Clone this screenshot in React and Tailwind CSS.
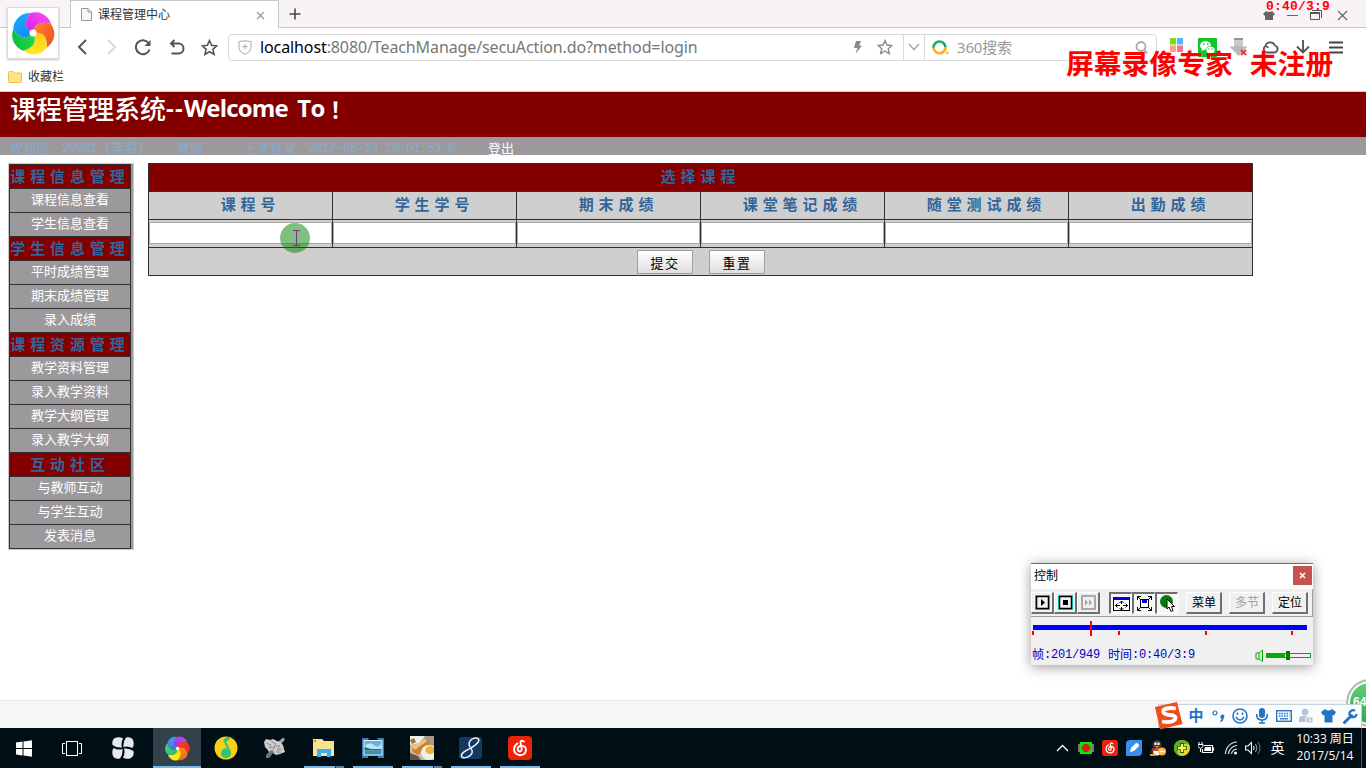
import React from 'react';

const SANS = "font-['Liberation_Sans','Noto_Sans_CJK_SC',sans-serif]";
const MONO = "font-['Liberation_Mono','Noto_Sans_CJK_SC',monospace]";

function Ico({ w = 16, h = 16, vb, className = '', children }) {
  return (
    <svg
      width={w}
      height={h}
      viewBox={vb || `0 0 ${w} ${h}`}
      fill="none"
      className={'block shrink-0 ' + className}
    >
      {children}
    </svg>
  );
}

const PETAL5 = 'M0 0Q-13.400 -6.800 -2.900 -20.800A17 17 0 0 1 18.900 -9.200Q2.300 -14.800 0 0Z';
const PETAL6 = 'M0 0Q-12.600 -8.200 -.7 -21A14 14 0 0 1 17.800 -11.100Q.8 -15 0 0Z';

function Pinwheel({ size, colors, hole = 3.4 }) {
  const step = 360 / colors.length;
  return (
    <svg width={size} height={size} viewBox="-23 -23 46 46" className="block shrink-0">
      {colors.map(([a, b], i) => (
        <g key={a} transform={`rotate(${i * step})`}>
          <linearGradient id={`p${size}-${i}`} x1="0" y1="1" x2="1" y2="0">
            <stop offset="0" stopColor={a} />
            <stop offset="1" stopColor={b} />
          </linearGradient>
          <path d={colors.length === 5 ? PETAL5 : PETAL6} fill={`url(#p${size}-${i})`} />
        </g>
      ))}
      <circle r={hole} fill="#fff" />
    </svg>
  );
}

function TabBar() {
  return (
    <div className="flex h-7 shrink-0 border-b border-[#c9c7c9] bg-[#f7f3f7]">
      <div className="ml-[70px] flex h-7 w-[209px] shrink-0 items-center border-x border-t border-[#c9c7c9] bg-white pl-[10px]">
        <Ico w={11} h={13}>
          <path d="M.5 .5H7L10.500 4V12.500H.5ZM7 .5V4H10.500" stroke="#999" fill="#f7f7f7" />
        </Ico>
        <span className="ml-[6px] w-[158px] text-[12px] leading-4 text-[#333]">课程管理中心</span>
        <Ico w={9} h={9} className="mt-[2px]">
          <path d="M1 1L8 8M8 1L1 8" stroke="#999" strokeWidth="1.200" />
        </Ico>
      </div>
      <Ico w={12} h={12} className="ml-[10px] mt-2">
        <path d="M6 .5V11.500M.5 6H11.500" stroke="#4a4a4a" strokeWidth="1.600" />
      </Ico>
      <div className="ml-auto mr-[18px] flex items-center gap-[12px] pt-[3px]">
        <Ico w={12} h={11}>
          <path d="M3 1L0 4L2 6V10H10V6L12 4L9 1Q6 3 3 1Z" fill="#666266" />
        </Ico>
        <Ico w={11} h={11}>
          <path d="M0 5.500H11" stroke="#666" />
        </Ico>
        <Ico w={12} h={11}>
          <path d="M.5 2.500H9.500V9.500H.5ZM2 .5H11.500V8" stroke="#555" />
          <path d="M.5 3H9.500" stroke="#555" strokeWidth="2" />
        </Ico>
        <Ico w={11} h={11} className="ml-[3px]">
          <path d="M1 1L10 10M10 1L1 10" stroke="#666" strokeWidth="1.200" />
        </Ico>
      </div>
    </div>
  );
}

const STAR = 'M8 1.500L10 6L14.800 6.500L11.200 9.700L12.300 14.500L8 12L3.700 14.500L4.800 9.700L1.200 6.500L6 6Z';

function NavBar() {
  return (
    <div className="flex h-[38px] shrink-0 items-center bg-white pl-[66px]">
      <div className="flex w-[31px] justify-center">
        <Ico w={10} h={16}>
          <path d="M9 1L2 8L9 15" stroke="#555" strokeWidth="2" />
        </Ico>
      </div>
      <div className="flex w-[29px] justify-center">
        <Ico w={10} h={16}>
          <path d="M1 1L8 8L1 15" stroke="#d8d8d8" strokeWidth="2" />
        </Ico>
      </div>
      <div className="flex w-[34px] justify-center">
        <Ico w={18} h={17}>
          <path d="M14.500 4A7 7 0 1 0 15.500 10.500" stroke="#555" strokeWidth="2" />
          <path d="M16.500 1V7H10.500Z" fill="#555" />
        </Ico>
      </div>
      <div className="flex w-[33px] justify-center">
        <Ico w={16} h={16}>
          <path d="M5.500 1L2 4.500L5.500 8M2 4.500H9.500A5 5 0 0 1 9.500 14.500H2.500" stroke="#555" strokeWidth="2" />
        </Ico>
      </div>
      <div className="flex w-[32px] justify-center">
        <Ico w={17} h={17} vb="0 0 16 16">
          <path d={STAR} stroke="#555" strokeWidth="1.500" />
        </Ico>
      </div>
      <div className="ml-[3px] flex h-[27px] w-[929px] shrink-0 items-center rounded-sm border border-[#d9d9d9]">
        <Ico w={14} h={15} className="ml-[9px]">
          <path d="M1 1.500Q4 1.500 7 .7Q10 1.500 13 1.500V8Q13 12 7 14.300Q1 12 1 8Z" stroke="#aaa" />
          <path d="M7 4V9.500M4.200 6.700H9.800" stroke="#aaa" />
        </Ico>
        <span className="ml-[8px] w-[590px] whitespace-nowrap font-['Noto_Sans',sans-serif] text-[16px] leading-5 tracking-[-0.11px] text-[#777]">
          <span className="text-black">localhost</span>:8080/TeachManage/secuAction.do?method=login
        </span>
        <Ico w={8} h={13} className="ml-[4px]">
          <path d="M2 0H7L5 4.500H8L1.500 13L3.500 7H0Z" fill="#888" />
        </Ico>
        <Ico w={16} h={16} className="ml-[15px]">
          <path d={STAR} stroke="#888" strokeWidth="1.400" />
        </Ico>
        <div className="ml-[10px] flex h-full w-[22px] items-center justify-center border-x border-[#d9d9d9]">
          <Ico w={12} h={8}>
            <path d="M1 1L6 6.500L11 1" stroke="#aaa" strokeWidth="1.600" />
          </Ico>
        </div>
        <Ico w={17} h={16} className="ml-[7px]">
          <path d="M1.500 9A6 6 0 1 1 13.500 8" stroke="#21ac58" strokeWidth="2.600" />
          <path d="M1.500 8.500A6 6 0 0 0 13.500 8" stroke="#fbb018" strokeWidth="2.600" />
          <circle cx="15.200" cy="14" r="1.300" fill="#fbb018" />
        </Ico>
        <span className="ml-[8px] font-['Noto_Sans','Noto_Sans_CJK_SC',sans-serif] text-[15px] leading-5 tracking-[-0.2px] text-[#999]">
          360搜索
        </span>
        <Ico w={13} h={13} className="ml-auto mr-[8px]">
          <circle cx="6" cy="5.500" r="4.500" stroke="#aaa" strokeWidth="1.800" />
          <path d="M9 8.500L12 12.500" stroke="#aaa" strokeWidth="2" />
        </Ico>
      </div>
      <div className="ml-[13px] flex items-center">
        <Ico w={13} h={14} className="mb-1">
          <path d="M0 0H6V6.500H0Z" fill="#7bd91e" />
          <path d="M7 0H13V6.500H7Z" fill="#4fb4f8" />
          <path d="M0 7.500H6V14H0Z" fill="#ffa27a" />
          <path d="M7 7.500H13V14H7Z" fill="#f8718a" />
        </Ico>
        <Ico w={19} h={19} className="ml-[15px]">
          <rect width="19" height="19" rx="1" fill="#0cc82c" />
          <ellipse cx="7.500" cy="7.500" rx="5.500" ry="4.300" fill="#fff" />
          <path d="M4 10L3.500 13L7 11.500Z" fill="#fff" />
          <ellipse cx="12.500" cy="12" rx="4.600" ry="3.800" fill="#fff" stroke="#0cc82c" strokeWidth=".7" />
          <path d="M14 15L15.500 16.500L15.500 13.500Z" fill="#fff" />
          <path d="M5 6H6.500M9 6H10.500M10.500 11H11.500M13.500 11H14.500" stroke="#0cc82c" strokeWidth="1.300" />
        </Ico>
        <Ico w={19} h={20} className="ml-[12px]">
          <path d="M5 1H14V9.500H18.500L9.500 19L.5 9.500H5Z" fill="#b4babf" />
          <path d="M5 1H14V9H5Z" fill="#c6cacd" />
          <path d="M5 1H14V3H5Z" fill="#8f959a" />
          <path d="M12 13L17 18M17 13L12 18" stroke="#ed3b32" strokeWidth="2" />
        </Ico>
        <Ico w={17} h={14} className="ml-[14px]">
          <path d="M4.500 12.500A3.600 3.600 0 0 1 3.500 6A5 5 0 0 1 13 5.500A3.600 3.600 0 0 1 12.500 12.500Z" stroke="#555" strokeWidth="1.800" />
          <path d="M4 6.500Q6 6.500 6.500 8" stroke="#555" strokeWidth="1.300" />
        </Ico>
        <Ico w={14} h={14} className="ml-[17px]">
          <path d="M7 0V12M1 6.500L7 12.500L13 6.500" stroke="#555" strokeWidth="1.900" />
        </Ico>
        <Ico w={14} h={13} className="ml-[19px]">
          <path d="M0 1.500H14M0 6.500H14M0 11.500H14" stroke="#444" strokeWidth="1.800" />
        </Ico>
      </div>
    </div>
  );
}

function Bookmarks() {
  return (
    <div className="flex h-[26px] shrink-0 items-center border-b border-[#cfcfcf] bg-white pb-[4px] pl-2">
      <Ico w={14} h={12}>
        <path d="M.5 1.500Q.5 .5 1.500 .5H5L6.500 2H12.500Q13.500 2 13.500 3V10.500Q13.500 11.500 12.500 11.500H1.500Q.5 11.500 .5 10.500Z" fill="#ffe384" stroke="#efc150" />
      </Ico>
      <span className="ml-[6px] text-[12px] leading-4 text-[#333]">收藏栏</span>
    </div>
  );
}

function Banner() {
  return (
    <div className="shrink-0">
      <div className="flex h-[45px] items-start bg-[#840000] pl-[10px] font-bold text-white">
        <span className="whitespace-nowrap font-['Noto_Sans_CJK_SC',sans-serif] text-[26px] font-medium leading-8">
          课程管理系统
        </span>
        <span className="font-['Open_Sans',sans-serif] text-[24px] leading-8 tracking-[1.200px]">--</span>
        <span className="w-[146px] whitespace-nowrap font-['Open_Sans',sans-serif] text-[24px] leading-8 tracking-[-0.8px] [word-spacing:4px]">
          Welcome To
        </span>
        <span className="font-['Noto_Sans_CJK_SC',sans-serif] text-[22px] leading-8">！</span>
      </div>
      <div className="flex h-[18px] items-center bg-[#9c999c] pl-[10px] pt-[5px] text-[13px] leading-[13px] text-[#84add0]">
        <span className="w-[52px]">欢迎您</span>
        <span className={`w-[115px] whitespace-nowrap tracking-[-0.8px] ${MONO}`}>
          20001 (<span className="tracking-normal">李湘</span>)
        </span>
        <span className="w-[67px]">教师</span>
        <span className="w-[64px] whitespace-nowrap">上次登录:</span>
        <span className={`w-[180px] whitespace-nowrap tracking-[-0.8px] ${MONO}`}>2017-05-14 10:01:53.0</span>
        <span className="text-white">登出</span>
      </div>
    </div>
  );
}

const MENU = [
  ['课程信息管理', ['课程信息查看', '学生信息查看']],
  ['学生信息管理', ['平时成绩管理', '期末成绩管理', '录入成绩']],
  ['课程资源管理', ['教学资料管理', '录入教学资料', '教学大纲管理', '录入教学大纲']],
  ['互动社区', ['与教师互动', '与学生互动', '发表消息']],
];

function Sidebar() {
  return (
    <div className="ml-2 mt-2 flex h-[387px] w-[126px] shrink-0 border border-[#c9c9c9] bg-[#9c999c]">
      <div className="h-[385px] w-[122px] border-x border-b border-[#312f31]">
        {MENU.map(([title, items]) => (
          <div key={title}>
            <div className="flex h-6 items-center justify-center whitespace-nowrap border-t border-[#312f31] bg-[#840000] text-[15px] font-bold leading-5 tracking-[4.900px] text-[#31659c]">
              {title}
            </div>
            {items.map((t) => (
              <div key={t} className="flex h-6 items-center justify-center border-t border-[#312f31] pb-px text-[13px] leading-5 text-white">
                {t}
              </div>
            ))}
          </div>
        ))}
      </div>
    </div>
  );
}

const COLUMNS = ['课程号', '学生学号', '期末成绩', '课堂笔记成绩', '随堂测试成绩', '出勤成绩'];

function FormButton({ children }) {
  return (
    <button className="h-6 w-14 border border-[#a0a0a0] bg-linear-to-b from-white to-[#e0dde0] pl-px pt-[3px] text-[13px] leading-[18px] tracking-[1.500px] text-black">
      {children}
    </button>
  );
}

function GradeForm() {
  return (
    <div className="ml-[14px] mt-2 h-[113px] w-[1105px] shrink-0 border border-[#312f31] bg-[#cfcfcf]">
      <div className="flex h-[27px] items-center justify-center bg-[#840000] text-[15px] font-bold tracking-[4.900px] text-[#31659c]">
        选择课程
      </div>
      <div className="flex">
        {COLUMNS.map((c) => (
          <div
            key={c}
            className="flex h-7 w-[184px] items-center justify-center border-r border-t border-[#312f31] pl-[20px] text-[15px] font-bold tracking-[4.900px] text-[#31659c] last:w-[183px] last:border-r-0"
          >
            {c}
          </div>
        ))}
      </div>
      <div className="flex">
        {COLUMNS.map((c) => (
          <div key={c} className="h-7 w-[184px] border-r border-t border-[#312f31] pt-[2px] last:w-[183px] last:border-r-0">
            <div className="h-[22px] w-full border border-[#a9a9a9] bg-white" />
          </div>
        ))}
      </div>
      <div className="flex h-7 items-start justify-center gap-4 border-t border-[#312f31] pt-[2px]">
        <FormButton>提交</FormButton>
        <FormButton>重置</FormButton>
      </div>
    </div>
  );
}

function Raised({ className = '', children }) {
  return (
    <div className={'flex h-[22px] items-center justify-center border-b-2 border-l border-r-2 border-t border-b-[#6f6f6f] border-l-white border-r-[#6f6f6f] border-t-white bg-[#f0f0f0] ' + className}>
      {children}
    </div>
  );
}

function Sunken({ children }) {
  return (
    <div className="flex h-[22px] w-[23px] items-center justify-center border-b border-l-2 border-r border-t-2 border-b-white border-l-[#6f6f6f] border-r-white border-t-[#6f6f6f] bg-[#f6f6f6]">
      {children}
    </div>
  );
}

function Recorder() {
  return (
    <div className={`absolute left-[1031px] top-[563px] flex h-[102px] w-[282px] flex-col border-t border-[#1883d7] bg-[#f0f0f0] text-[12px] shadow-[0_2px_12px_rgba(0,0,0,0.4)] ${SANS}`}>
      <div className="flex h-[25px] shrink-0 justify-between bg-white pl-[3px] pr-px pt-[2px]">
        <span className="pt-px leading-[18px] text-black">控制</span>
        <div className="flex h-[19px] w-[19px] items-center justify-center bg-[#c75050]">
          <Ico w={7} h={7}>
            <path d="M1 1L6 6M6 1L1 6" stroke="#fff" strokeWidth="1.600" />
          </Ico>
        </div>
      </div>
      <div className="flex h-[28px] shrink-0 items-center border-b border-r border-[#a0a0a0]">
        <Raised className="w-[23px]">
          <Ico w={15} h={15}>
            <rect width="15" height="15" fill="#00efef" />
            <rect x="1.500" y="1.500" width="12" height="12" fill="#f0f0f0" stroke="#000" strokeWidth="1.500" />
            <path d="M6 4L10 7.500L6 11Z" fill="#000" />
          </Ico>
        </Raised>
        <Raised className="w-[23px]">
          <Ico w={15} h={15}>
            <rect width="15" height="15" fill="#00efef" />
            <rect x="1.500" y="1.500" width="12" height="12" fill="#f0f0f0" stroke="#000" strokeWidth="1.500" />
            <path d="M5 5H10V10H5Z" fill="#000" />
          </Ico>
        </Raised>
        <Raised className="w-[23px]">
          <Ico w={15} h={15}>
            <rect x="1" y="1" width="13" height="13" fill="#f0f0f0" stroke="#a0a0a0" strokeWidth="1.800" />
            <path d="M4 4.500L7 7.500L4 10.500ZM8 4.500L11 7.500L8 10.500Z" fill="#a0a0a0" />
          </Ico>
        </Raised>
        <div className="ml-[9px] flex">
          <Sunken>
            <Ico w={17} h={15}>
              <rect x=".5" y="1.500" width="16" height="13" stroke="#000" fill="#fff" />
              <path d="M1 2.500H16" stroke="#0000e0" strokeWidth="3" />
              <path d="M8.500 5V14M2 9.500H15M4.500 7.500L2.500 9.500L4.500 11.500M12.500 7.500L14.500 9.500L12.500 11.500M6.500 7L8.500 5L10.500 7M6.500 12L8.500 14L10.500 12" stroke="#000" />
              <rect x="7" y="8" width="3" height="3" fill="#fff" />
            </Ico>
          </Sunken>
          <Sunken>
            <Ico w={15} h={15}>
              <rect x="3.500" y="3.500" width="8" height="8" stroke="#000" fill="#fff" />
              <path d="M5 5.500H10" stroke="#0000e0" strokeWidth="3" />
              <path d="M.5 4V.5H4M11 .5H14.500V4M.5 11V14.500H4M11 14.500H14.500V11M.5 .5L4 4M14.500 .5L11 4M.5 14.500L4 11M14.500 14.500L11 11" stroke="#000" />
            </Ico>
          </Sunken>
          <Sunken>
            <Ico w={17} h={18}>
              <circle cx="7.500" cy="7.500" r="6.500" fill="#008000" />
              <path d="M8 5V15L10 13L12 17.500L14 16.500L12.500 12.500H15.500Z" fill="#fff" stroke="#000" />
            </Ico>
          </Sunken>
        </div>
        <Raised className="ml-[8px] w-[36px] pl-px pt-[2px] text-black">菜单</Raised>
        <Raised className="ml-[7px] w-[36px] pl-px pt-[2px] text-[#a0a0a0]">多节</Raised>
        <Raised className="ml-[7px] w-[36px] pl-px pt-[2px] text-black">定位</Raised>
      </div>
      <div className="shrink-0 pl-px pt-[4px]">
        <Ico w={276} h={16}>
          <path d="M1 4H275V9H1Z" fill="#0000ff" />
          <path d="M58 0H60V15H58ZM0 10H2V14H0ZM86 10H88V14H86ZM173 10H175V14H173ZM259 10H261V14H259Z" fill="#ff0000" />
        </Ico>
      </div>
      <div className="flex items-center pl-px pt-[10px] leading-4 text-[#0000c8]">
        <span>帧</span>
        <span className={`w-[64px] text-[12px] tracking-[-0.2px] ${MONO}`}>:201/949</span>
        <span>时间</span>
        <span className={`text-[12px] tracking-[-0.2px] ${MONO}`}>:0:40/3:9</span>
        <Ico w={56} h={13} className="ml-auto mr-[2px]">
          <path d="M1 4H4V10H1ZM4 4L7.500 1V12.500L4 10" stroke="#00b000" />
          <rect x="11.500" y="4.500" width="44" height="4" stroke="#00b000" />
          <path d="M11 4H30V9H11Z" fill="#00b000" />
          <path d="M31 2H35V11H31Z" fill="#007c00" />
        </Ico>
      </div>
    </div>
  );
}

function InputBar() {
  return (
    <div className="absolute left-[1158px] top-[704px] flex h-6 w-[204px] items-center border border-[#c4d2df] bg-[#fafcfe] text-[#2274c5]">
      <div className="w-[26px]">
        <Ico w={30} h={30} className="-ml-[5px]">
          <path d="M1 6L23 1L28.500 23L6 28.500Z" fill="#f04d1a" />
          <path d="M22 7.500Q13 6 9.500 9Q8 13.500 16 14Q23 14.500 21 18.500Q17 22.500 8 20.500" stroke="#fff" strokeWidth="3.800" />
        </Ico>
      </div>
      <div className="flex w-[22px] justify-center text-[15px] font-bold leading-5">中</div>
      <div className="flex w-[22px] justify-center">
        <Ico w={13} h={12}>
          <circle cx="3" cy="3" r="2" stroke="#2274c5" strokeWidth="1.200" />
          <path d="M8.500 6A2 2 0 1 1 11.800 8Q11.500 11 8.500 12L8 11Q9.500 10 9.500 9Q8 8 8.500 6Z" fill="#2274c5" />
        </Ico>
      </div>
      <div className="flex w-[22px] justify-center">
        <Ico w={16} h={16}>
          <circle cx="8" cy="8" r="7" stroke="#2274c5" strokeWidth="1.600" />
          <path d="M5.500 4.500V7M10.500 4.500V7M4 9Q8 15 12 9" stroke="#2274c5" strokeWidth="1.500" />
        </Ico>
      </div>
      <div className="flex w-[22px] justify-center">
        <Ico w={12} h={16}>
          <rect x="3" y="0" width="6" height="10" rx="3" fill="#2274c5" />
          <path d="M.8 6V8Q1.500 12 6 12Q10.500 12 11.200 8V6M6 12V15M3 15H9" stroke="#2274c5" strokeWidth="1.500" />
        </Ico>
      </div>
      <div className="flex w-[22px] justify-center">
        <Ico w={16} h={12}>
          <rect x=".7" y=".7" width="14.600" height="10.600" stroke="#2274c5" strokeWidth="1.400" />
          <path d="M3 3.500H13.500M3 6H13.500" stroke="#2274c5" strokeWidth="1.400" strokeDasharray="1.500 1" />
          <path d="M4 8.800H12" stroke="#2274c5" strokeWidth="1.300" />
        </Ico>
      </div>
      <div className="flex w-[23px] justify-center">
        <Ico w={15} h={16}>
          <circle cx="6" cy="4" r="3.300" fill="#b5c3d6" />
          <path d="M0 14V10Q1 7.500 6 7.500Q9 7.500 10 9V14Z" fill="#b5c3d6" />
          <path d="M7 9H14V15H7Z" fill="#b5c3d6" stroke="#fff" />
          <path d="M10.500 10.500V13H12" stroke="#fff" />
        </Ico>
      </div>
      <div className="flex w-[21px] justify-center">
        <Ico w={15} h={14}>
          <path d="M4 0Q7.500 3 11 0L15 3L13 6.500L11.500 6V13.500H3.500V6L2 6.500L0 3Z" fill="#2274c5" />
        </Ico>
      </div>
      <div className="flex w-[22px] justify-center">
        <Ico w={15} h={15}>
          <path d="M1.500 13.500L8.500 6.500" stroke="#2274c5" strokeWidth="3" strokeLinecap="round" />
          <path d="M12 1.800A3.500 3.500 0 1 0 13.500 5" stroke="#2274c5" strokeWidth="2.300" />
        </Ico>
      </div>
    </div>
  );
}

function NetEase({ size }) {
  return (
    <svg width={size} height={size} viewBox="0 0 24 24" className="block shrink-0" fill="none">
      <rect width="24" height="24" rx="4" fill="#ee2209" />
      <path
        d="M16 5.500Q12.500 3.500 12.500 6.500L13.800 13Q13.500 15.500 11.700 15.500Q9.500 15.200 9.700 12.500Q10.500 9.800 13.500 9.600Q18 10 18 14Q17.500 19 12 19.200Q6.200 18.500 6 13Q6.200 9.500 9.500 7.500"
        stroke="#fff"
        strokeWidth="1.900"
        strokeLinecap="round"
      />
    </svg>
  );
}

function Task({ children, active, open, stacked }) {
  return (
    <div className={'flex shrink-0 flex-col items-center ' + (active ? 'w-12 bg-[#33424a]' : 'w-[49px]')}>
      <div className="flex h-[38px] items-center pt-[2px]">{children}</div>
      {active && <div className="h-[2px] w-full bg-[#76b9ed]" />}
      {open && (
        <div className="flex h-[2px] w-10 bg-[#76b9ed]">
          {stacked && <div className="ml-auto w-[9px] border-l border-[#17303f] bg-[#5384aa]" />}
        </div>
      )}
    </div>
  );
}

function Taskbar() {
  return (
    <div className="flex h-10 shrink-0 bg-[#000f16]">
      <div className="flex w-12 items-center justify-center">
        <Ico w={16} h={17}>
          <path d="M0 2.500L6.500 1.600V8H0ZM7.500 1.400L16 .2V8H7.500ZM0 9H6.500V15.400L0 14.500ZM7.500 9H16V16.800L7.500 15.600Z" fill="#fff" />
        </Ico>
      </div>
      <div className="flex w-12 items-center justify-center">
        <Ico w={20} h={15}>
          <rect x="4.500" y=".5" width="11" height="14" stroke="#fff" />
          <path d="M3 2.500H.5V12.500H3M17 2.500H19.500V12.500H17" stroke="#fff" />
        </Ico>
      </div>
      <div className="mr-[3px] flex w-[54px] items-center justify-center">
        <Ico w={22} h={22}>
          {[0, 90, 180, 270].map((r) => (
            <path key={r} transform={`rotate(${r} 11 11)`} d="M10 10.500Q4.500 11 .5 8Q-.5 2.500 3.500 .8Q8 -.5 11 1.500Q8.500 6 10 10.500Z" fill="#e6e9ee" />
          ))}
        </Ico>
      </div>
      <Task active>
        <Pinwheel
          size={25}
          hole={3}
          colors={[
            ['#a22ee0', '#c44bf0'],
            ['#ff4a20', '#e62222'],
            ['#ff9a1c', '#f05a20'],
            ['#ffd900', '#fff01e'],
            ['#2fb673', '#40d080'],
            ['#3a72e4', '#4a9cf8'],
          ]}
        />
      </Task>
      <Task>
        <Ico w={24} h={24}>
          <circle cx="12" cy="12" r="11.500" fill="#f8cf19" />
          <circle cx="12" cy="17.300" r="5" fill="#31c27c" />
          <path d="M15.800 16L10.500 4.800" stroke="#31c27c" strokeWidth="2" />
          <path d="M9.300 4.800Q11 1 16 .8Q15.500 5 10.500 6.500Z" fill="#31c27c" />
        </Ico>
      </Task>
      <Task>
        <Ico w={23} h={22}>
          <path d="M15 5L20 .5L22 2.500L18 7Z" fill="#a5a5a5" />
          <path d="M1 5L3 2L7 3L10 2L14 4L17 5L20 8L21 12L22 15L17 17L13 18L10 16L6 15L4 12L2 10Z" fill="#cdcdcd" />
          <path d="M3 6L8 8L6 11L12 10L9 14M8 4L13 7L11 9L17 9L14 13L19 12M13 15L18 15" stroke="#8f8f8f" />
          <path d="M3 18L8 13L11 15L6 21L3 21Z" fill="#777" />
        </Ico>
      </Task>
      <Task open stacked>
        <Ico w={21} h={20}>
          <path d="M0 1H9L11 3H21V18H0Z" fill="#ffe08e" />
          <path d="M1 2H3V4H1Z" fill="#d79b1b" />
          <path d="M4 19V11H18V19H14V15H8V19Z" fill="#35b1ee" />
        </Ico>
      </Task>
      <Task open>
        <Ico w={22} h={20}>
          <path d="M0 0H7L6 2H16L15 0H22V20H16V18H6V20H0Z" fill="#347bb8" />
          <path d="M1.500 2H20.500V17.500H1.500Z" fill="#d9f1fc" />
          <path d="M2.500 3H19.500V10H2.500Z" fill="#68b1df" />
          <path d="M2.500 8Q8 3 12 7T19.500 5V11H2.500Z" fill="#b9e2f3" />
          <path d="M2.500 9L9 11H19.500V12.500H2.500Z" fill="#276968" />
          <path d="M2.500 12.500H19.500V16.500H2.500Z" fill="#3f8fae" />
        </Ico>
      </Task>
      <Task open stacked>
        <Ico w={24} h={24}>
          <rect width="24" height="24" fill="#c9bba8" />
          <path d="M14 0H24V9L16 12Z" fill="#a89a86" />
          <path d="M0 0H15L9 7L0 9Z" fill="#f0eeea" />
          <path d="M0 4L4 2L6 6L2 8Z" fill="#a3752f" />
          <path d="M2 12L17 3L20 7L8 19L3 16Z" fill="#c9812e" />
          <path d="M2 11L16 3L17 5L5 14Z" fill="#f0c375" />
          <path d="M0 17L8 20L11 24H0Z" fill="#5f554a" />
          <ellipse cx="19" cy="16.500" rx="8" ry="7.500" fill="#f1eee9" />
          <ellipse cx="20" cy="14" rx="4.500" ry="4" fill="#e8b43a" />
        </Ico>
      </Task>
      <Task open>
        <Ico w={23} h={24}>
          <rect y="1" width="23" height="22" rx="3" fill="#143866" />
          <path d="M19.500 3C17 .5 10.500 3 10 8C10 12 14.500 13 13 17C11 21.500 4 23 2.500 20.500C1.500 17 7 14.500 12 12C17 9.500 21 5 19.500 3Z" stroke="#eef2f7" strokeWidth="1.500" />
        </Ico>
      </Task>
      <Task open>
        <NetEase size={24} />
      </Task>
      <div className="ml-auto flex items-center text-white">
        <div className="flex w-6 justify-center">
          <Ico w={13} h={8}>
            <path d="M1 7L6.500 1.500L12 7" stroke="#fff" strokeWidth="1.300" />
          </Ico>
        </div>
        <div className="flex w-6 justify-center">
          <Ico w={16} h={12}>
            <path d="M0 2H16V10H0Z" fill="#777" />
            <path d="M2 0H14V12H2Z" fill="#00ef00" />
            <path d="M3 6L6 2H10L13 6L10 10H6Z" fill="#e01b1b" />
          </Ico>
        </div>
        <div className="flex w-6 justify-center"><NetEase size={16} /></div>
        <div className="flex w-6 justify-center">
          <Ico w={16} h={16}>
            <path d="M4 0H16V12Q16 16 12 16H0V4Q0 0 4 0Z" fill="#3b8cf1" />
            <path d="M4 12L5 8L10 3Q13 3 13 6L8 11Z" fill="#fff" />
          </Ico>
        </div>
        <div className="flex w-6 justify-center">
          <Ico w={16} h={16}>
            <ellipse cx="7" cy="5" rx="4.500" ry="5" fill="#3a3a3a" />
            <path d="M1 13Q0 9 3 8H11Q14 10 13 14H2Z" fill="#333" />
            <ellipse cx="7" cy="12" rx="3.800" ry="3.600" fill="#fff" />
            <path d="M4.500 2.500H6.500V5H4.500ZM7.500 2.500H9.500V5H7.500Z" fill="#fff" />
            <path d="M4.500 6H9.500L7 7.500Z" fill="#ffa41c" />
            <path d="M2 8Q7 10 12 8V10Q7 12 2 10Z" fill="#e42a1d" />
            <path d="M0 14H6V16H0Z" fill="#f49c20" />
            <circle cx="12" cy="11.500" r="4" fill="#ffb347" />
            <path d="M9.500 11.500H14.500" stroke="#fff" strokeWidth="1.500" />
          </Ico>
        </div>
        <div className="flex w-6 justify-center">
          <Ico w={16} h={16}>
            <circle cx="8" cy="8" r="8" fill="#f5d21b" />
            <path d="M1 4A8 8 0 0 1 15 5Q8 2 5 8T8 16A8 8 0 0 1 1 4Z" fill="#54b52c" />
            <path d="M8 3V13M3 8H13" stroke="#17601e" strokeWidth="4" />
            <path d="M8 4V12M4 8H12" stroke="#ffef6a" strokeWidth="2.300" />
          </Ico>
        </div>
        <div className="flex w-6 justify-center">
          <Ico w={17} h={12}>
            <path d="M6 3.500H14.500V10.500H4.500V7M15.500 5.500V8.500" stroke="#fff" strokeWidth="1.200" />
            <path d="M7 5H13V9H6Z" fill="#fff" />
            <path d="M1 0V2M4 0V2M0 2.500H5V4.500L2.500 6.500L0 4.500ZM2.500 6V10" stroke="#fff" />
          </Ico>
        </div>
        <div className="flex w-6 justify-center">
          <Ico w={14} h={14} className="ml-[2px]">
            <path d="M1.500 13A12 12 0 0 1 13 1M4.500 13A9 9 0 0 1 13 4.500M7.500 13A6 6 0 0 1 13 8" stroke="#ddd" strokeWidth="1.200" />
            <circle cx="11.500" cy="12" r="1.500" fill="#fff" />
          </Ico>
        </div>
        <div className="flex w-[23px] justify-center">
          <Ico w={17} h={14}>
            <path d="M.6 5H3L6.500 1.500V12.500L3 9H.6Z" stroke="#fff" strokeWidth="1.100" />
            <path d="M8.500 5Q10 7 8.500 9" stroke="#fff" />
            <path d="M10.500 3Q13.500 7 10.500 11" stroke="#aaa" />
            <path d="M13 1Q17 7 13 13" stroke="#777" />
          </Ico>
        </div>
        <div className="flex w-[25px] justify-center text-[14px] leading-5">英</div>
        <div className="flex w-[71px] flex-col items-center whitespace-nowrap pr-px pb-[2px] font-['Open_Sans','Noto_Sans_CJK_SC',sans-serif] text-[12px] leading-[17px]">
          <span>10:33 周日</span>
          <span>2017/5/14</span>
        </div>
        <div className="h-10 w-[5px] border-l border-[#4b565c]" />
      </div>
    </div>
  );
}

export default function App() {
  return (
    <div className={`relative flex h-[768px] w-[1366px] flex-col overflow-hidden bg-white ${SANS}`}>
      <TabBar />
      <NavBar />
      <Bookmarks />
      <Banner />
      <div className="flex h-[545px] shrink-0 items-start">
        <Sidebar />
        <GradeForm />
      </div>
      <div className="h-7 shrink-0 border-t border-[#e8e8e8] bg-[#f6f6f6]" />
      <Taskbar />

      <div className="absolute left-[7px] top-[7px] flex h-[52px] w-[52px] items-center justify-center border border-[#dcdcdc] bg-white shadow-[0_1px_2px_rgba(0,0,0,0.25)]">
        <Pinwheel
          size={44}
          hole={3.6}
          colors={[
            ['#d61fe6', '#fb52f5'],
            ['#ff8a2e', '#ee4a1c'],
            ['#ffc41a', '#fff12a'],
            ['#28dd50', '#04b83c'],
            ['#1684f0', '#16b4ff'],
          ]}
        />
      </div>
      <div className={`absolute left-[1266px] top-0 whitespace-nowrap text-[13px] font-bold leading-[14px] tracking-[0.2px] text-[#ff0000] ${MONO}`}>
        0:40/3:9
      </div>
      <div className="absolute left-[1066px] top-[45px] flex gap-[17px] whitespace-nowrap font-['Noto_Sans_CJK_SC',sans-serif] text-[27.800px] font-bold leading-[34px] text-[#ff0000]">
        <span>屏幕录像专家</span>
        <span>未注册</span>
      </div>
      <div className="absolute left-[280px] top-[223px] flex h-[30px] w-[30px] items-center justify-center rounded-full bg-[#008000]/50 pl-[3px]">
        <Ico w={7} h={16}>
          <path d="M0 .5H7M3.500 .5V15.500M0 15.500H7" stroke="#803080" />
        </Ico>
      </div>
      <Recorder />
      <div className="absolute left-[1346px] top-[679px] flex h-12 w-12 items-center rounded-full border-2 border-[#b9bdb9] bg-linear-to-b from-[#62d07a] to-[#2fa648] pb-[2px] pl-[5px] text-[12px] font-bold text-white ring-2 ring-inset ring-white">
        64
      </div>
      <InputBar />
    </div>
  );
}
